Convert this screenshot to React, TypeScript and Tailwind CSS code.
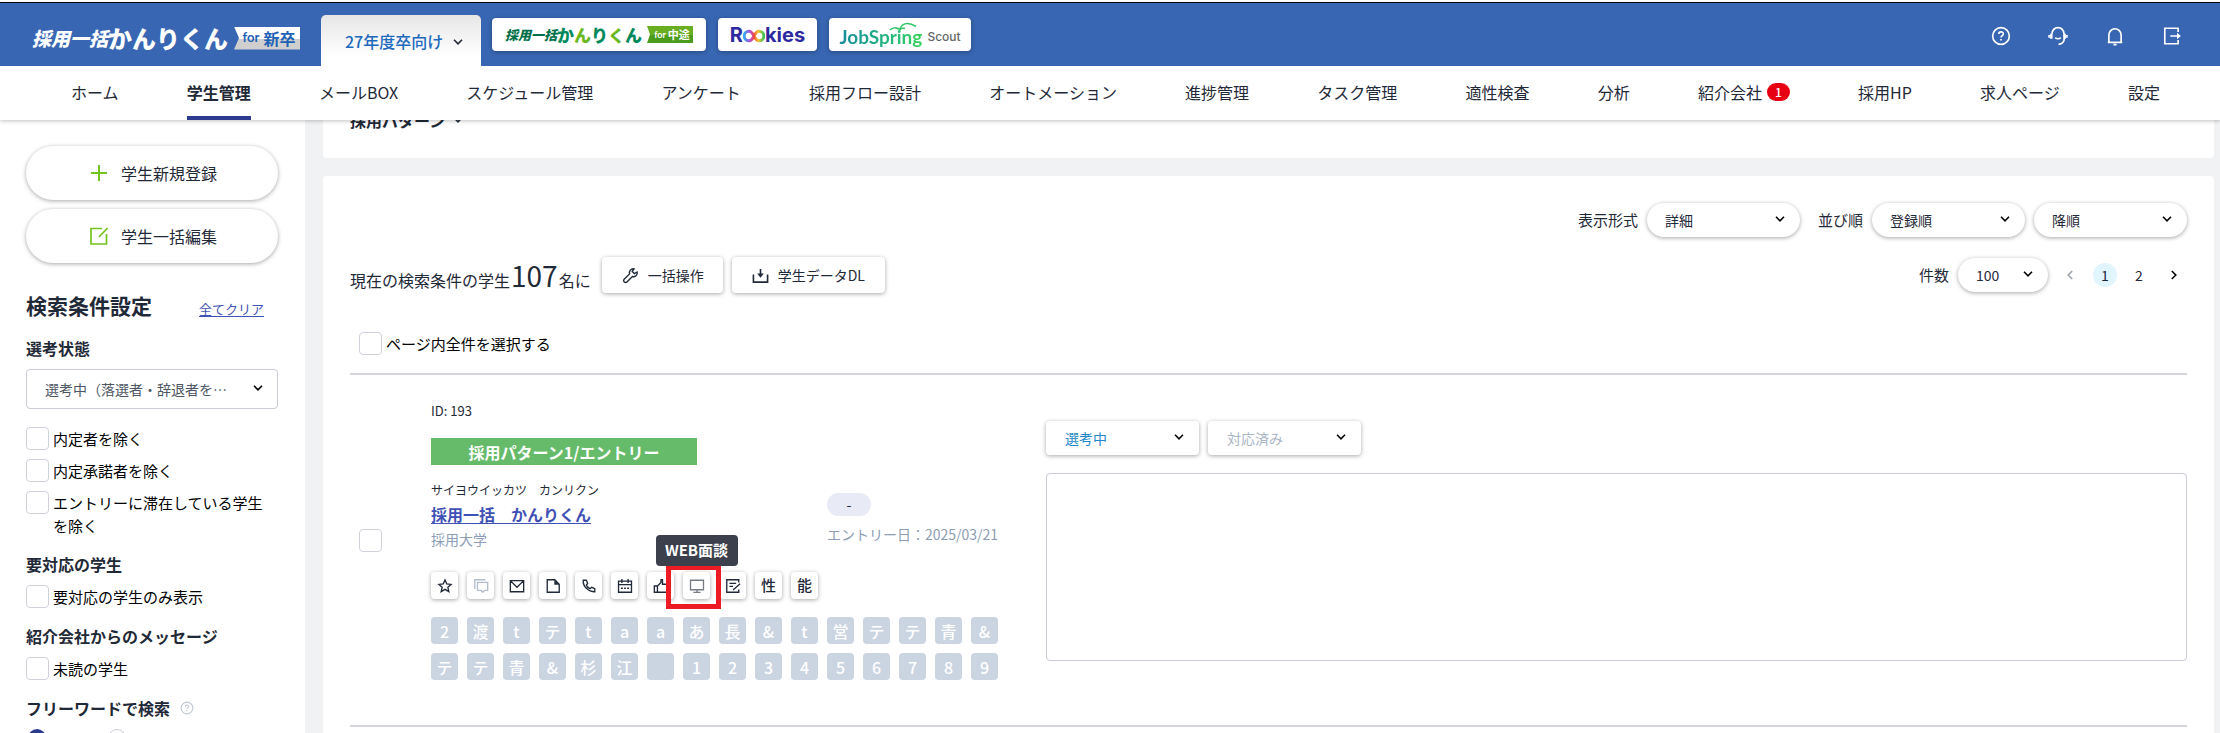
import type { ReactNode } from "react";
import clsx from "clsx";

const navItems = [
    "ホーム",
    "学生管理",
    "メールBOX",
    "スケジュール管理",
    "アンケート",
    "採用フロー設計",
    "オートメーション",
    "進捗管理",
    "タスク管理",
    "適性検査",
    "分析",
    "紹介会社",
    "採用HP",
    "求人ページ",
    "設定",
];

const tags = [
    "2", "渡", "t", "テ", "t", "a", "a", "あ", "長", "&", "t", "営", "テ", "テ", "青", "&",
    "テ", "テ", "青", "&", "杉", "江", "", "1", "2", "3", "4", "5", "6", "7", "8", "9",
];

function Chevron({ className }: { className?: string }) {
    return (
        <svg viewBox="0 0 10 6" className={clsx("h-[6px] w-[10px]", className)} fill="none" stroke="currentColor" strokeWidth="1.6" aria-hidden="true">
            <path d="M1 .8l4 4 4-4" />
        </svg>
    );
}

function Icon({ children, className = "size-[18px]" }: { children: ReactNode; className?: string }) {
    return (
        <svg viewBox="0 0 18 18" className={className} fill="none" stroke="currentColor" strokeWidth="1.5" aria-hidden="true">
            {children}
        </svg>
    );
}

type SelectProps = {
    label: string;
    value: string;
    id?: string;
    box: string;
    chevron?: string;
};

function Select({ label, value, id, box, chevron = "right-[15px]" }: SelectProps) {
    return (
        <div className="relative">
            <select id={id} aria-label={label} className={clsx("block appearance-none truncate bg-white text-[14px]", box)}>
                <option>{value}</option>
            </select>
            <Chevron className={clsx("pointer-events-none absolute top-1/2 -mt-[4px] text-black", chevron)} />
        </div>
    );
}

const pill = "h-[34px] rounded-full pl-[18px] pr-8 text-[#1f2937] shadow-[0_1px_4px_rgba(0,0,0,0.35)]";
const card = "h-[34px] w-[153px] rounded pl-[19px] pr-8 shadow-[0_1px_4px_rgba(0,0,0,0.35)]";

function Check({ label }: { label: string }) {
    return (
        <label className="flex gap-1 pr-3 text-[15px] leading-[23px] text-black">
            <input type="checkbox" className="size-[23px] shrink-0 appearance-none rounded border border-[#d1d1db] bg-white" />
            <span>{label}</span>
        </label>
    );
}

function Heading({ children }: { children: ReactNode }) {
    return <h3 className="flex items-center text-[16px] leading-6 font-bold">{children}</h3>;
}

function Header() {
    return (
        <header className="relative z-10 shrink-0 bg-white shadow-[0_1px_4px_rgba(0,0,0,0.25)]">
            <div className="h-[2px]" />
            <div className="flex h-16 items-end border-t border-black bg-[#3866b2] pl-8">
                <a href="#" className="mb-4 flex w-[268px] shrink-0 items-center justify-between whitespace-nowrap text-white">
                    <span className="flex items-center leading-6 font-black">
                        <span className="text-[19px] italic">採用一括</span>
                        <span className="text-[24px]">かんりくん</span>
                    </span>
                    <span className="flex h-[23px] w-[66px] items-center justify-center gap-1 bg-linear-to-b from-white from-50% to-[#cfcfcf] to-50% pl-1 text-[#1c62b5] [clip-path:polygon(0_0,100%_0,100%_100%,0_100%,5px_50%)]">
                        <span className="font-['Lato'] text-[13px] font-bold">for</span>
                        <span className="text-[16px] font-bold">新卒</span>
                    </span>
                </a>
                <button className="ml-[21px] flex h-[51px] w-[160px] shrink-0 items-center rounded-t-[5px] bg-linear-to-b from-[#e6e6e6] to-white to-80% pl-6 text-[16px] font-medium text-[#1c69bd]">
                    27年度卒向け
                    <Chevron className="mt-[3px] ml-[10px] text-[#1f2937]" />
                </button>
                <div className="mb-[15px] ml-[11px] flex gap-3">
                    <a href="#" className="flex h-[33px] w-[214px] items-center justify-center gap-[5px] rounded bg-white whitespace-nowrap shadow-[0_1px_4px_rgba(0,0,0,0.3)]">
                        <span className="flex items-center leading-6 font-black text-[#00704a]">
                            <span className="text-[13px] italic">採用一括</span>
                            <span className="text-[17px] text-[#008a5c]">か</span>
                            <span className="text-[17px] text-[#6ab81e]">ん</span>
                            <span className="text-[17px] text-[#008a5c]">り</span>
                            <span className="text-[17px] text-[#6ab81e]">く</span>
                            <span className="text-[17px] text-[#008a5c]">ん</span>
                        </span>
                        <span className="flex h-[17px] w-[46px] items-center justify-center gap-[2px] bg-linear-to-b from-[#69ad20] from-50% to-[#4b9c1c] to-50% pl-1 text-white [clip-path:polygon(0_0,100%_0,100%_100%,0_100%,3px_50%)]">
                            <span className="font-['Lato'] text-[9px] font-bold">for</span>
                            <span className="text-[11px] font-bold">中途</span>
                        </span>
                    </a>
                    <a href="#" aria-label="Rookies" className="flex h-[33px] w-[99px] items-center justify-center rounded bg-white font-['Inter'] text-[20px] font-bold text-[#2d2aa0] shadow-[0_1px_4px_rgba(0,0,0,0.3)]">
                        R
                        <svg viewBox="0 0 22 14" className="mt-[3px] h-[14px] w-[22px]" fill="none" strokeWidth="3" aria-hidden="true">
                            <defs>
                                <linearGradient id="loop" x1="0" x2="1" y1="0" y2="0">
                                    <stop offset="0" stopColor="#35a7f0" />
                                    <stop offset=".3" stopColor="#b44be0" />
                                    <stop offset=".5" stopColor="#f04a3c" />
                                    <stop offset=".7" stopColor="#fbc02d" />
                                    <stop offset="1" stopColor="#3ec45a" />
                                </linearGradient>
                            </defs>
                            <path stroke="url(#loop)" d="M11 7C9.5 4 8 2.2 6 2.2a4.800 4.800 0 0 0 0 9.600c2 0 3.500-1.800 5-4.800s3-4.800 5-4.800a4.800 4.800 0 0 1 0 9.600c-2 0-3.500-1.800-5-4.800z" />
                        </svg>
                        kies
                    </a>
                    <a href="#" className="relative flex h-[33px] w-[142px] items-center justify-center gap-[5px] rounded bg-white pt-1 whitespace-nowrap shadow-[0_1px_4px_rgba(0,0,0,0.3)]">
                        <svg viewBox="0 0 28 9" className="absolute top-1 left-[60px] h-[9px] w-[28px]" fill="none" stroke="#30c766" strokeWidth="1.5" aria-hidden="true">
                            <path d="M1 8c2-2.5 6-3 10-.5C12 2 18-1 27 4.5M11 7.500c1-1.500 3-1.500 5-1" />
                        </svg>
                        <span className="bg-linear-to-r from-[#1a8a9c] to-[#35d35c] bg-clip-text font-['Lato'] text-[19px] leading-6 font-bold text-transparent">JobSpring</span>
                        <span className="font-['Inter'] text-[12px] font-medium text-[#666]">Scout</span>
                    </a>
                </div>
                <div className="mr-[38px] mb-5 ml-auto flex gap-[37px] text-white">
                    <button aria-label="ヘルプ">
                        <Icon className="size-5">
                            <circle cx="9" cy="9" r="7.5" />
                            <path d="M7 7.300c0-2.700 4.100-2.600 4.100-.2C11.100 8.700 9 8.600 9 10.400M9 11.700v1.400" />
                        </Icon>
                    </button>
                    <button aria-label="サポート">
                        <Icon className="size-5">
                            <path d="M3.500 7.200C4 3.500 6 1.500 9 1.500s5 2 5.500 5.700M14.600 7v4.500c0 2.600-2.200 4.600-5.100 5M6.500 10.500c1.300 1.300 3.700 1.300 5 0" />
                            <path d="M3 7v4.500M15 7v4.500" strokeWidth="2.2" />
                            <path d="M1 8v2.500M17 8v2.500" />
                        </Icon>
                    </button>
                    <button aria-label="お知らせ">
                        <Icon className="size-5">
                            <path d="M2.500 14.700h13M3.500 14.700V8a5.500 5.500 0 0 1 11 0v6.700M7.600 16.700h2.800" />
                        </Icon>
                    </button>
                    <button aria-label="ログアウト">
                        <Icon className="size-5">
                            <path d="M14.500 5.500V2h-12v14h12v-3.500M7.500 9h8" />
                            <path d="M13.500 6l3.500 3-3.500 3z" fill="currentColor" stroke="none" />
                        </Icon>
                    </button>
                </div>
            </div>
            <nav className="flex h-[54px] justify-between pr-[60px] pl-[71px] text-[16px] whitespace-nowrap">
                {navItems.map((item) => (
                    <a
                        key={item}
                        href="#"
                        className={clsx(
                            "flex items-center gap-[5px] border-b-4 pt-[2px]",
                            item === "学生管理" ? "border-[#2c3b8f] font-bold" : "border-transparent"
                        )}
                    >
                        {item}
                        {item === "紹介会社" && (
                            <span className="flex h-[18px] w-[23px] items-center justify-center rounded-full bg-[#e60012] text-[12px] font-medium text-white">1</span>
                        )}
                    </a>
                ))}
            </nav>
        </header>
    );
}

function Sidebar() {
    const button = "flex h-[54px] w-full items-center rounded-full bg-white pl-16 text-[16px] shadow-[0_1px_4px_rgba(0,0,0,0.35)]";
    return (
        <aside className="w-[305px] shrink-0 bg-white pt-[26px] pr-[27px] pl-[26px]">
            <button className={button}>
                <Icon className="mr-[13px] size-[18px] text-[#74c21f]">
                    <path d="M9 1v16M1 9h16" strokeWidth="2" />
                </Icon>
                学生新規登録
            </button>
            <button className={clsx(button, "mt-[9px]")}>
                <Icon className="mr-[13px] size-[18px] text-[#74c21f]">
                    <path d="M12 1.500H1v15.500h15.500V7M9 10l8.500-9" strokeWidth="1.7" />
                </Icon>
                学生一括編集
            </button>
            <div className="mt-[26px] flex items-end justify-between pr-[14px]">
                <h2 className="text-[21px] leading-8 font-bold">検索条件設定</h2>
                <a href="#" className="text-[13px] leading-6 text-[#3f51b5] underline underline-offset-2">全てクリア</a>
            </div>
            <div className="mt-[15px]">
                <Heading>選考状態</Heading>
            </div>
            <div className="mt-[9px]">
                <Select
                    label="選考状態"
                    value="選考中（落選者・辞退者を…"
                    box="h-10 w-full rounded border border-[#c9cbd6] pr-10 pl-[18px] text-[#4b5563]"
                />
            </div>
            <div className="mt-[18px] flex flex-col gap-[9px]">
                <Check label="内定者を除く" />
                <Check label="内定承諾者を除く" />
                <Check label="エントリーに滞在している学生を除く" />
            </div>
            <div className="mt-[15px] flex flex-col gap-[9px]">
                <Heading>要対応の学生</Heading>
                <Check label="要対応の学生のみ表示" />
            </div>
            <div className="mt-4 flex flex-col gap-[9px]">
                <Heading>紹介会社からのメッセージ</Heading>
                <Check label="未読の学生" />
            </div>
            <div className="mt-4">
                <Heading>
                    フリーワードで検索
                    <Icon className="ml-[10px] size-[14px] text-[#c3cad6]">
                        <circle cx="9" cy="9" r="7.5" />
                        <path d="M7 7.300c0-2.700 4.100-2.600 4.100-.2C11.100 8.700 9 8.600 9 10.400M9 11.700v1.400" />
                    </Icon>
                </Heading>
            </div>
            <div className="mt-[9px] flex gap-[62px] pl-[2px]">
                <input type="radio" name="mode" aria-label="AND" defaultChecked className="size-[18px] appearance-none rounded-full border-[5px] border-[#2c3b8f]" />
                <input type="radio" name="mode" aria-label="OR" className="size-[18px] appearance-none rounded-full border border-[#c9cbd6]" />
            </div>
        </aside>
    );
}

const actions: { label: string; icon: ReactNode; tone?: string }[] = [
    { label: "お気に入り", icon: <path d="M9 2.200l2 4.500 4.800.5-3.600 3.200 1.100 4.900L9 12.800l-4.300 2.500 1.100-4.900-3.600-3.200 4.800-.5z" /> },
    {
        label: "メッセージ",
        tone: "text-[#b4bfce]",
        icon: <path d="M5 5h11.500v9H13l-2 2-2-2H5zM2 12.500V2h12" />,
    },
    { label: "メール", icon: <path d="M1.500 3h15v12.500h-15zM2 3.500l7 7 7-7" /> },
    {
        label: "ファイル",
        icon: (
            <>
                <path d="M2.500 2h8.500l5 5v9H2.500z" />
                <path d="M10.500 2l5.500 5.500h-5.500z" fill="currentColor" stroke="none" />
            </>
        ),
    },
    {
        label: "電話",
        icon: <path d="M2.500 2.500c-.5 7 5.500 13 13 13V12l-3.500-1.500-2 1.500C8 11 6.800 9.800 6 8l1.500-2L6 2.500z" />,
    },
    {
        label: "予定",
        icon: (
            <>
                <path d="M1.700 3.500h14.600v12.500H1.700zM1.700 7.500h14.600M5.500 1v4.500M12.500 1v4.500" />
                <path d="M4.500 11.500h9" strokeDasharray="2 1.500" />
            </>
        ),
    },
    { label: "いいね", icon: <path d="M1.500 9H5v7H1.500zM5 9l4-4V1.800h1.700V7H17v3.500L15 16H5" /> },
    { label: "WEB面談", tone: "text-[#777c86]", icon: <path d="M1.700 2.500h14.600v10.700H1.700zM9 13.200v3M5 16.200h8" /> },
    { label: "評価", icon: <path d="M15.500 5V2H2v14h13.500v-3M5 6h7.500M5 9.500h4M9 13.500L17 6.500" /> },
    { label: "性", icon: null },
    { label: "能", icon: null },
];

function StudentRow() {
    return (
        <section className="flex border-b-2 border-[#d5d5dc] pb-[45px] pl-[9px]">
            <input type="checkbox" aria-label="学生を選択" className="mt-[154px] mr-[49px] size-[23px] shrink-0 appearance-none rounded border border-[#d1d1db]" />
            <div className="w-[606px] shrink-0 pt-[26px]">
                <p className="text-[13px] leading-5">ID: 193</p>
                <p className="mt-[17px] flex h-[27px] w-[266px] items-center justify-center bg-[#66bb6a] text-[16px] font-bold text-white">採用パターン1/エントリー</p>
                <div className="flex justify-between pr-[36px]">
                    <div>
                        <p className="mt-4 text-[12px] leading-[18px]">サイヨウイッカツ　カンリクン</p>
                        <a href="#" className="mt-[3px] block text-[16px] leading-6 font-bold text-[#3f51b5] underline underline-offset-2">採用一括　かんりくん</a>
                        <p className="mt-[3px] text-[14px] leading-5 text-[#8c9db5]">採用大学</p>
                    </div>
                    <div className="w-[174px]">
                        <p className="mt-7 flex h-[23px] w-11 items-center justify-center rounded-full bg-[#e8eaf6] text-[14px]">-</p>
                        <p className="mt-2 text-[14px] leading-5 whitespace-nowrap text-[#8c9db5]">エントリー日：2025/03/21</p>
                    </div>
                </div>
                <div className="mt-[23px] flex gap-[9px]">
                    {actions.map(({ label, icon, tone }) => (
                        <div key={label} className="relative">
                            <button
                                aria-label={label}
                                className={clsx("flex size-[27px] items-center justify-center rounded bg-white text-[15px] font-medium shadow-[0_1px_4px_rgba(0,0,0,0.35)]", tone)}
                            >
                                {icon ? <Icon className="size-4">{icon}</Icon> : label}
                            </button>
                            {label === "WEB面談" && (
                                <>
                                    <span className="absolute -top-[7px] -left-[17px] z-10 h-[44px] w-[55px] border-[5px] border-[#ed1c24]" />
                                    <span role="tooltip" className="absolute bottom-[33px] left-1/2 z-20 flex h-[31px] w-[82px] -translate-x-1/2 items-center justify-center rounded bg-[#3b404c] text-[15px] font-bold whitespace-nowrap text-white">
                                        WEB面談
                                    </span>
                                </>
                            )}
                        </div>
                    ))}
                </div>
                <div className="mt-[18px] grid w-fit grid-cols-16 gap-[9px]">
                    {tags.map((tag, i) => (
                        <span key={i} className="flex size-[27px] items-center justify-center rounded bg-[#cbd4e1] text-[16px] font-medium text-white">{tag}</span>
                    ))}
                </div>
            </div>
            <div className="ml-[9px] min-w-0 grow pt-[46px]">
                <div className="flex gap-[9px]">
                    <Select label="選考ステータス" value="選考中" box={clsx(card, "text-[#1e88c9]")} />
                    <Select label="対応ステータス" value="対応済み" box={clsx(card, "text-[#aab6c6]")} />
                </div>
                <textarea aria-label="メモ" className="mt-[18px] block h-[188px] w-full resize-none rounded border border-[#c9cbd6]" />
            </div>
        </section>
    );
}

function StudentList() {
    const tool = "flex h-9 items-center rounded bg-white text-[14px] shadow-[0_1px_4px_rgba(0,0,0,0.35)]";
    return (
        <div className="mt-[18px] grow rounded-t bg-white px-[27px] pt-[27px]">
            <div className="flex items-center justify-end gap-[9px] text-[15px]">
                <label htmlFor="view">表示形式</label>
                <Select id="view" label="表示形式" value="詳細" box={clsx(pill, "w-[153px]")} />
                <label htmlFor="sort" className="ml-[9px]">並び順</label>
                <Select id="sort" label="並び順" value="登録順" box={clsx(pill, "w-[153px]")} />
                <Select label="昇順・降順" value="降順" box={clsx(pill, "w-[153px]")} />
            </div>
            <div className="mt-5 flex items-start gap-[9px]">
                <p className="mr-[2px] text-[16px] leading-9">
                    現在の検索条件の学生<span className="px-px text-[28px]">107</span>名に
                </p>
                <button className={clsx(tool, "w-[121px] pl-5")}>
                    <Icon className="mr-[9px] size-[17px]">
                        <path d="M2 13.300l6-6c-.8-3 1.500-5.800 4.800-5.300l-2 2.700 2.300 2.300 2.900-1.700c.8 3.300-2.300 5.800-5 4.800l-6 6c-2 1.200-4-.9-3-2.800z" />
                    </Icon>
                    一括操作
                </button>
                <button className={clsx(tool, "w-[153px] pl-5")}>
                    <Icon className="mr-[9px] size-[17px]">
                        <path d="M1.500 8v8h15V8M9 2v6" strokeWidth="1.7" />
                        <path d="M5.500 7h7L9 11.500z" fill="currentColor" stroke="none" />
                    </Icon>
                    学生データDL
                </button>
                <div className="ml-auto flex items-center gap-[9px] pt-px text-[15px]">
                    <label htmlFor="count">件数</label>
                    <Select id="count" label="件数" value="100" box={clsx(pill, "w-[90px]")} />
                    <div className="flex items-center gap-[10px] text-[14px]">
                        <button aria-label="前のページ" className="flex w-[26px] justify-center text-[#9aa3af]">
                            <Chevron className="rotate-90" />
                        </button>
                        <button className="flex size-6 items-center justify-center rounded-full bg-[#e1f5fe]">1</button>
                        <button className="flex size-6 items-center justify-center">2</button>
                        <button aria-label="次のページ" className="flex w-[26px] justify-center text-black">
                            <Chevron className="-rotate-90" />
                        </button>
                    </div>
                </div>
            </div>
            <div className="mt-[34px] border-b-2 border-[#d5d5dc] pb-[18px] pl-[9px]">
                <Check label="ページ内全件を選択する" />
            </div>
            <StudentRow />
        </div>
    );
}

export default function App() {
    return (
        <div className="flex h-screen flex-col overflow-hidden bg-[#f1f2f4] font-['Noto_Sans_CJK_JP',sans-serif] text-[#1f2937]">
            <Header />
            <div className="flex min-h-0 grow">
                <Sidebar />
                <main className="mr-[6px] ml-[18px] flex min-w-0 grow flex-col">
                    <div className="h-[38px] shrink-0 rounded-b bg-white pl-[27px]">
                        <button className="-mt-3 flex items-center gap-2 text-[16px] leading-6 font-bold">
                            採用パターン
                            <Chevron />
                        </button>
                    </div>
                    <StudentList />
                </main>
            </div>
        </div>
    );
}
